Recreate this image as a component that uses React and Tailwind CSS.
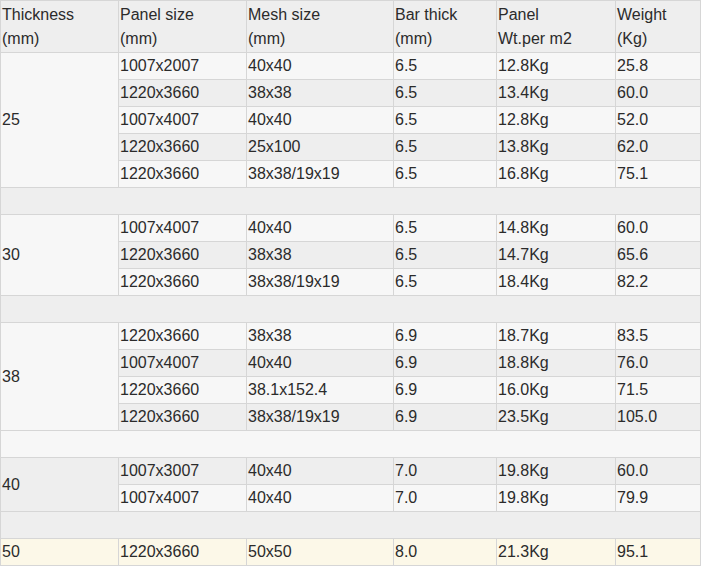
import React from "react";

const groups = [
  { t: "25", rows: [
    ["1007x2007", "40x40", "6.5", "12.8Kg", "25.8"],
    ["1220x3660", "38x38", "6.5", "13.4Kg", "60.0"],
    ["1007x4007", "40x40", "6.5", "12.8Kg", "52.0"],
    ["1220x3660", "25x100", "6.5", "13.8Kg", "62.0"],
    ["1220x3660", "38x38/19x19", "6.5", "16.8Kg", "75.1"],
  ]},
  { t: "30", rows: [
    ["1007x4007", "40x40", "6.5", "14.8Kg", "60.0"],
    ["1220x3660", "38x38", "6.5", "14.7Kg", "65.6"],
    ["1220x3660", "38x38/19x19", "6.5", "18.4Kg", "82.2"],
  ]},
  { t: "38", rows: [
    ["1220x3660", "38x38", "6.9", "18.7Kg", "83.5"],
    ["1007x4007", "40x40", "6.9", "18.8Kg", "76.0"],
    ["1220x3660", "38.1x152.4", "6.9", "16.0Kg", "71.5"],
    ["1220x3660", "38x38/19x19", "6.9", "23.5Kg", "105.0"],
  ]},
  { t: "40", rows: [
    ["1007x3007", "40x40", "7.0", "19.8Kg", "60.0"],
    ["1007x4007", "40x40", "7.0", "19.8Kg", "79.9"],
  ]},
  { t: "50", rows: [
    ["1220x3660", "50x50", "8.0", "21.3Kg", "95.1"],
  ]},
];

const cell = "border border-[#d6d6d6] pl-px pr-[2px] py-px align-middle leading-6 h-[27px]";
const head = "border border-[#d6d6d6] pl-px pr-[2px] pt-[2px] pb-px leading-6 align-top";

export default function App() {
  const trs = [];
  let idx = 2; // tr index, header is 1
  groups.forEach((g, gi) => {
    g.rows.forEach((r, ri) => {
      const isLast = gi === groups.length - 1;
      const bg = isLast ? "bg-[#fcf8e8]" : idx % 2 === 0 ? "bg-[#f7f7f7]" : "bg-[#eeeeee]";
      trs.push(
        <tr key={`${gi}-${ri}`} className={bg}>
          {ri === 0 && (
            <td rowSpan={g.rows.length} className={cell}>{g.t}</td>
          )}
          {r.map((v, i) => (
            <td key={i} className={cell}>{v}</td>
          ))}
        </tr>
      );
      idx++;
    });
    if (gi < groups.length - 1) {
      const bg = idx % 2 === 0 ? "bg-[#f7f7f7]" : "bg-[#eeeeee]";
      trs.push(
        <tr key={`b${gi}`} className={bg}>
          <td colSpan={6} className={cell}></td>
        </tr>
      );
      idx++;
    }
  });

  return (
    <div className="w-[702px] h-[568px] bg-white font-['Liberation_Sans',Arial,sans-serif] text-[16px] text-[#2b2b2b]">
      <table className="border-collapse w-[700px] table-fixed">
        <colgroup>
          <col className="w-[118px]" />
          <col className="w-[128px]" />
          <col className="w-[147px]" />
          <col className="w-[103px]" />
          <col className="w-[119px]" />
          <col className="w-[85px]" />
        </colgroup>
        <tbody>
          <tr className="bg-[#eeeeee]">
            <td className={head}>Thickness<br />(mm)</td>
            <td className={head}>Panel size<br />(mm)</td>
            <td className={head}>Mesh size<br />(mm)</td>
            <td className={head}>Bar thick<br />(mm)</td>
            <td className={head}>Panel<br />Wt.per m2</td>
            <td className={head}>Weight<br />(Kg)</td>
          </tr>
          {trs}
        </tbody>
      </table>
    </div>
  );
}
